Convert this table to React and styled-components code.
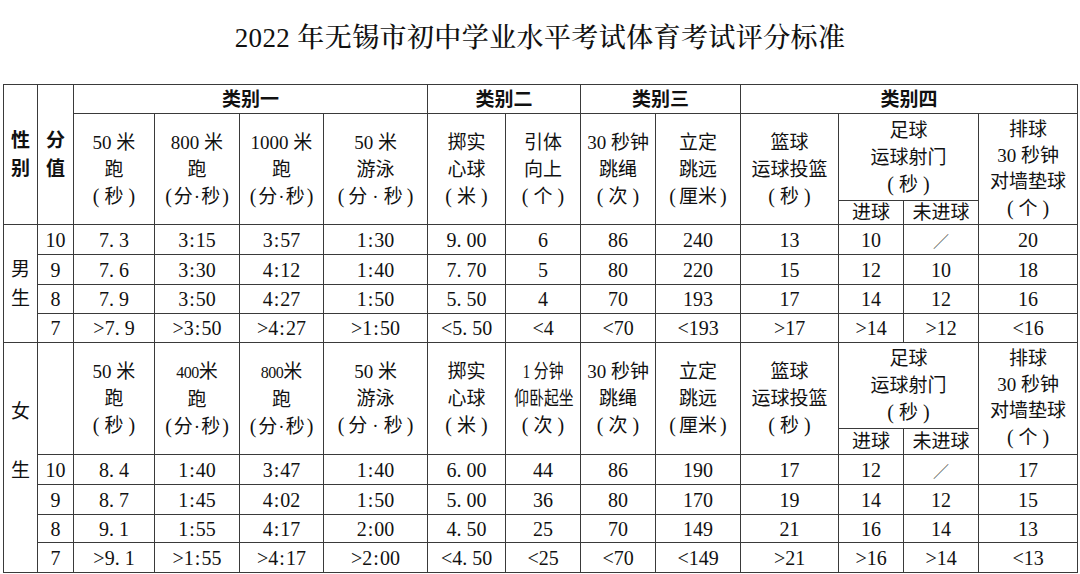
import React from 'react'
import styled, { createGlobalStyle } from 'styled-components'

const FONT = `"Liberation Serif", "Noto Sans CJK SC", serif`

const GlobalStyle = createGlobalStyle`
  html, body {
    margin: 0;
    padding: 0;
    background: #fff;
  }
  body {
    font-family: ${FONT};
    color: #111;
  }
`

const StyledPage = styled.div`
  width: 1080px;
  height: 574px;
  padding: 0 3px;
  box-sizing: border-box;
  overflow: hidden;
`

const StyledTitle = styled.h1`
  margin: 0;
  padding-top: 23px;
  height: 84px;
  box-sizing: border-box;
  font-family: "Liberation Serif", "Noto Serif CJK SC", "Noto Sans CJK SC", serif;
  font-size: 27px;
  font-weight: 500;
  line-height: 30px;
  text-align: center;
  letter-spacing: 0.4px;
`

const StyledTable = styled.table`
  width: 1074px;
  border-collapse: collapse;
  table-layout: fixed;
  border: 1.5px solid #555;
`

const StyledRow = styled.tr`
  height: ${(p) => p.$h}px;
`

const StyledCell = styled.td`
  border: 1px solid #3a3a3a;
  padding: 0;
  text-align: center;
  vertical-align: middle;
  font-size: 20px;
  line-height: 22px;
  white-space: nowrap;
`

const StyledHead = styled(StyledCell)`
  font-size: ${(p) => p.$size || 19}px;
  line-height: ${(p) => p.$lh || 27}px;
  font-weight: ${(p) => (p.$bold ? 700 : 400)};
`

const StyledSide = styled(StyledCell)`
  font-size: 19px;
  line-height: ${(p) => p.$lh}px;
  padding-bottom: ${(p) => p.$pb || 0}px;
  font-weight: ${(p) => (p.$bold ? 700 : 400)};
`

const StyledColon = styled.span`
  margin: 0 1px;
`

const StyledSlash = styled.span`
  font-family: "Noto Sans CJK SC", sans-serif;
  font-size: 16px;
  color: #555;
`

const StyledSmallDigits = styled.span`
  font-size: 16px;
  letter-spacing: -0.5px;
`

const StyledNarrow = styled.span`
  display: inline-block;
  font-size: 19px;
  transform: scaleX(0.78);
`

const StyledParen = styled.span`
  font-family: "Liberation Serif", serif;
  font-size: 20px;
`

const StyledParenInner = styled.span`
  padding: 0 ${(p) => p.$pad}px;
`

const StyledDot = styled.span`
  margin: 0 ${(p) => (p.$wide ? 5 : 1)}px;
`

const COLS = [34, 36, 81, 85, 84, 104, 78, 75, 75, 85, 98, 65, 75, 99]

const male = [
  ['10', '7. 3', '3:15', '3:57', '1:30', '9. 00', '6', '86', '240', '13', '10', '/', '20'],
  ['9', '7. 6', '3:30', '4:12', '1:40', '7. 70', '5', '80', '220', '15', '12', '10', '18'],
  ['8', '7. 9', '3:50', '4:27', '1:50', '5. 50', '4', '70', '193', '17', '14', '12', '16'],
  ['7', '>7. 9', '>3:50', '>4:27', '>1:50', '<5. 50', '<4', '<70', '<193', '>17', '>14', '>12', '<16']
]

const female = [
  ['10', '8. 4', '1:40', '3:47', '1:40', '6. 00', '44', '86', '190', '17', '12', '/', '17'],
  ['9', '8. 7', '1:45', '4:02', '1:50', '5. 00', '36', '80', '170', '19', '14', '12', '15'],
  ['8', '9. 1', '1:55', '4:17', '2:00', '4. 50', '25', '70', '149', '21', '16', '14', '13'],
  ['7', '>9. 1', '>1:55', '>4:17', '>2:00', '<4. 50', '<25', '<70', '<149', '>21', '>16', '>14', '<13']
]

const Unit = ({ children, pad = 5 }) => (
  <>
    <StyledParen>(</StyledParen>
    <StyledParenInner $pad={pad}>{children}</StyledParenInner>
    <StyledParen>)</StyledParen>
  </>
)

const MinSec = ({ wide }) => (
  <Unit pad={wide ? 4 : 2}>分<StyledDot $wide={wide}>·</StyledDot>秒</Unit>
)

const maleHeads = [
  ['50 米', '跑', <Unit>秒</Unit>],
  ['800 米', '跑', <MinSec />],
  ['1000 米', '跑', <MinSec />],
  ['50 米', '游泳', <MinSec wide />],
  ['掷实', '心球', <Unit>米</Unit>],
  ['引体', '向上', <Unit>个</Unit>],
  ['30 秒钟', '跳绳', <Unit>次</Unit>],
  ['立定', '跳远', <Unit pad={3}>厘米</Unit>]
]

const femaleHeads = [
  ['50 米', '跑', <Unit>秒</Unit>],
  [<><StyledSmallDigits>400</StyledSmallDigits>米</>, '跑', <MinSec />],
  [<><StyledSmallDigits>800</StyledSmallDigits>米</>, '跑', <MinSec />],
  ['50 米', '游泳', <MinSec wide />],
  ['掷实', '心球', <Unit>米</Unit>],
  [<StyledNarrow>1 分钟</StyledNarrow>, <StyledNarrow>仰卧起坐</StyledNarrow>, <Unit>次</Unit>],
  ['30 秒钟', '跳绳', <Unit>次</Unit>],
  ['立定', '跳远', <Unit pad={3}>厘米</Unit>]
]

const Lines = ({ lines }) =>
  lines.map((line, i) => (
    <React.Fragment key={i}>
      {i > 0 && <br />}
      {line}
    </React.Fragment>
  ))

const Value = ({ text }) => {
  if (text === '/') return <StyledSlash>／</StyledSlash>
  const parts = text.split(':')
  if (parts.length === 1) return text
  return (
    <>
      {parts[0]}
      <StyledColon>:</StyledColon>
      {parts[1]}
    </>
  )
}

// the trailing header cells shared by both halves
const SportHeads = () => (
  <>
    <StyledHead rowSpan={2}>
      <Lines lines={['篮球', '运球投篮', <Unit>秒</Unit>]} />
    </StyledHead>
    <StyledHead colSpan={2}>
      <Lines lines={['足球', '运球射门', <Unit>秒</Unit>]} />
    </StyledHead>
    <StyledHead rowSpan={2} $lh={26}>
      <Lines lines={['排球', '30 秒钟', '对墙垫球', <Unit>个</Unit>]} />
    </StyledHead>
  </>
)

const GoalRow = ({ h }) => (
  <StyledRow $h={h}>
    <StyledHead $lh={22}>进球</StyledHead>
    <StyledHead $lh={22}>未进球</StyledHead>
  </StyledRow>
)

const DataRow = ({ row, h, side }) => (
  <StyledRow $h={h}>
    {side}
    {row.map((v, i) => (
      <StyledCell key={i}>
        <Value text={v} />
      </StyledCell>
    ))}
  </StyledRow>
)

const App = () => (
  <StyledPage>
    <GlobalStyle />
    <StyledTitle>2022 年无锡市初中学业水平考试体育考试评分标准</StyledTitle>

    <StyledTable>
      <colgroup>
        {COLS.map((w, i) => (
          <col key={i} style={{ width: w }} />
        ))}
      </colgroup>
      <tbody>
        <StyledRow $h={29}>
          <StyledSide rowSpan={3} $lh={28} $bold>性<br />别</StyledSide>
          <StyledSide rowSpan={3} $lh={28} $bold>分<br />值</StyledSide>
          <StyledHead colSpan={4} $bold>类别一</StyledHead>
          <StyledHead colSpan={2} $bold>类别二</StyledHead>
          <StyledHead colSpan={2} $bold>类别三</StyledHead>
          <StyledHead colSpan={4} $bold>类别四</StyledHead>
        </StyledRow>
        <StyledRow $h={87}>
          {maleHeads.map((lines, i) => (
            <StyledHead key={i} rowSpan={2}>
              <Lines lines={lines} />
            </StyledHead>
          ))}
          <SportHeads />
        </StyledRow>
        <GoalRow h={24} />

        {male.map((row, r) => (
          <DataRow
            key={r}
            row={row}
            h={r < 2 ? 30 : 29}
            side={r === 0 && <StyledSide rowSpan={4} $lh={29}>男<br />生</StyledSide>}
          />
        ))}

        <StyledRow $h={86}>
          <StyledSide rowSpan={6} $lh={59} $pb={34}>女<br />生</StyledSide>
          <StyledSide rowSpan={2} />
          {femaleHeads.map((lines, i) => (
            <StyledHead key={i} rowSpan={2}>
              <Lines lines={lines} />
            </StyledHead>
          ))}
          <SportHeads />
        </StyledRow>
        <GoalRow h={26} />

        {female.map((row, r) => (
          <DataRow key={r} row={row} h={[30, 30, 28, 30][r]} />
        ))}
      </tbody>
    </StyledTable>
  </StyledPage>
)

export default App
